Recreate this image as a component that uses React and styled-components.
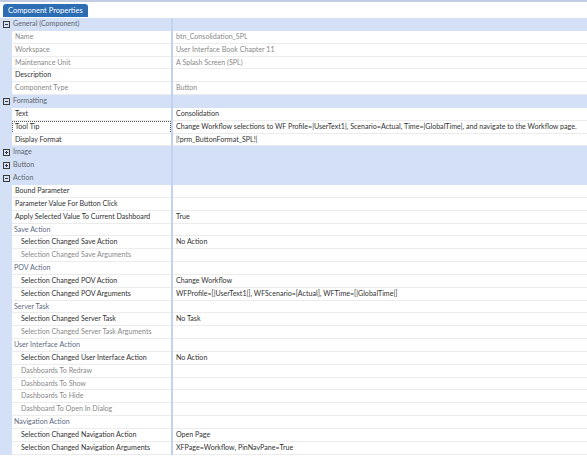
import React from "react";
import styled, { createGlobalStyle } from "styled-components";

const GlobalStyle = createGlobalStyle`
  html, body {
    margin: 0;
    padding: 0;
    background: #ffffff;
  }
  body {
    font-family: Lato, "Open Sans", sans-serif;
  }
`;

const ROW_H = "12.85px";

const Panel = styled.div`
  width: 587px;
  height: 458px;
  overflow: hidden;
  background: #fff;
  border-top: 2px solid #c2cde3;
  box-sizing: border-box;
`;

const TabStrip = styled.div`
  display: flex;
  padding: 2px 0 1px 3px;
`;

const TabButton = styled.div`
  height: 13px;
  padding: 0 5px;
  display: flex;
  align-items: center;
  background: #2d6db3;
  color: #ffffff;
  font-size: 7.5px;
  border-radius: 3px 3px 0 0;
`;

const Grid = styled.div`
  display: flex;
  flex-direction: column;
`;

const Row = styled.div`
  display: grid;
  grid-template-columns: 12px 159px 2px 1fr;
  height: ${ROW_H};
  font-size: 7.1px;
  line-height: ${ROW_H};
  white-space: nowrap;
`;

const Gutter = styled.div`
  background: #d4e0f5;
  display: flex;
  align-items: center;
  justify-content: center;
`;

const Divider = styled.div`
  background: #c3d2ee;
`;

const HeaderCell = styled.div`
  background: #d4e0f5;
  color: #60666f;
  padding-left: 1px;
`;

const NameCell = styled.div`
  position: relative;
  background: #fff;
  border-bottom: 1px solid #ececec;
  box-sizing: border-box;
  padding-left: ${(p) => (p.$nested ? 9 : p.$group ? 2 : 3)}px;
  color: ${(p) => (p.$group ? "#5f6b85" : p.$muted ? "#8a8a8a" : "#333")};
  overflow: hidden;
  ${(p) =>
    p.$focused &&
    `
    &::after {
      content: "";
      position: absolute;
      inset: 0 0 -1px 0;
      border: 1px dotted #555;
    }
  `}
`;

const ValueCell = styled.div`
  background: #fff;
  border-bottom: 1px solid #ececec;
  box-sizing: border-box;
  padding-left: 3px;
  color: ${(p) => (p.$muted ? "#8a8a8a" : "#333")};
  overflow: hidden;
`;

const ExpanderIcon = ({ open }) => (
  <svg width="7" height="7" viewBox="0 0 7 7">
    <rect x="0.5" y="0.5" width="6" height="6" fill="none" stroke="#3c3c3c" />
    <line x1="2" y1="3.5" x2="5" y2="3.5" stroke="#3c3c3c" />
    {!open && <line x1="3.5" y1="2" x2="3.5" y2="5" stroke="#3c3c3c" />}
  </svg>
);

const sections = [
  {
    title: "General (Component)",
    open: true,
    rows: [
      { name: "Name", value: "btn_Consolidation_SPL", muted: true, valueMuted: true },
      { name: "Workspace", value: "User Interface Book Chapter 11", muted: true, valueMuted: true },
      { name: "Maintenance Unit", value: "A Splash Screen (SPL)", muted: true, valueMuted: true },
      { name: "Description" },
      { name: "Component Type", value: "Button", muted: true, valueMuted: true },
    ],
  },
  {
    title: "Formatting",
    open: true,
    rows: [
      { name: "Text", value: "Consolidation" },
      {
        name: "Tool Tip",
        focused: true,
        value:
          "Change Workflow selections to WF Profile=|UserText1|, Scenario=Actual, Time=|GlobalTime|, and navigate to the Workflow page.",
      },
      { name: "Display Format", value: "|!prm_ButtonFormat_SPL!|" },
    ],
  },
  { title: "Image", open: false, rows: [] },
  { title: "Button", open: false, rows: [] },
  {
    title: "Action",
    open: true,
    rows: [
      { name: "Bound Parameter" },
      { name: "Parameter Value For Button Click" },
      { name: "Apply Selected Value To Current Dashboard", value: "True" },
      { group: "Save Action" },
      { name: "Selection Changed Save Action", value: "No Action", nested: true },
      { name: "Selection Changed Save Arguments", nested: true, muted: true },
      { group: "POV Action" },
      { name: "Selection Changed POV Action", value: "Change Workflow", nested: true },
      {
        name: "Selection Changed POV Arguments",
        value: "WFProfile=[|UserText1|], WFScenario=[Actual], WFTime=[|GlobalTime|]",
        nested: true,
      },
      { group: "Server Task" },
      { name: "Selection Changed Server Task", value: "No Task", nested: true },
      { name: "Selection Changed Server Task Arguments", nested: true, muted: true },
      { group: "User Interface Action" },
      { name: "Selection Changed User Interface Action", value: "No Action", nested: true },
      { name: "Dashboards To Redraw", nested: true, muted: true },
      { name: "Dashboards To Show", nested: true, muted: true },
      { name: "Dashboards To Hide", nested: true, muted: true },
      { name: "Dashboard To Open In Dialog", nested: true, muted: true },
      { group: "Navigation Action" },
      { name: "Selection Changed Navigation Action", value: "Open Page", nested: true },
      {
        name: "Selection Changed Navigation Arguments",
        value: "XFPage=Workflow, PinNavPane=True",
        nested: true,
      },
    ],
  },
];

function SectionHeader({ title, open }) {
  return (
    <Row>
      <Gutter>
        <ExpanderIcon open={open} />
      </Gutter>
      <HeaderCell>{title}</HeaderCell>
      <Divider />
      <HeaderCell />
    </Row>
  );
}

function PropertyRow({ row }) {
  return (
    <Row>
      <Gutter />
      <NameCell
        $group={!!row.group}
        $nested={row.nested}
        $muted={row.muted}
        $focused={row.focused}
      >
        {row.group || row.name}
      </NameCell>
      <Divider />
      <ValueCell $muted={row.valueMuted}>{row.value}</ValueCell>
    </Row>
  );
}

export default function App() {
  return (
    <>
      <GlobalStyle />
      <Panel>
        <TabStrip>
          <TabButton>Component Properties</TabButton>
        </TabStrip>
        <Grid>
          {sections.map((s) => (
            <React.Fragment key={s.title}>
              <SectionHeader title={s.title} open={s.open} />
              {s.open &&
                s.rows.map((r, i) => <PropertyRow key={s.title + i} row={r} />)}
            </React.Fragment>
          ))}
        </Grid>
      </Panel>
    </>
  );
}
